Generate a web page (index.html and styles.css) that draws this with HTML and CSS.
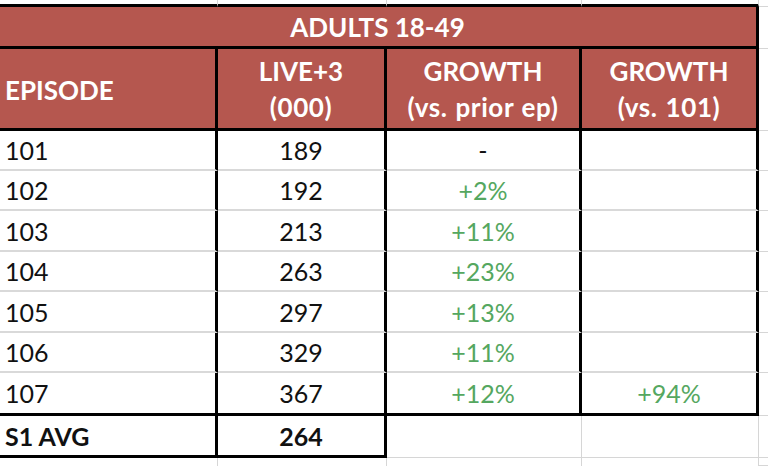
FILE: index.html
```html
<!DOCTYPE html>
<html lang="en">
<head>
<meta charset="utf-8">
<title>Adults 18-49</title>
<link rel="stylesheet" href="styles.css">
</head>
<body>
<div class="sheet" role="table">
  <div class="cell strip-top"></div>
  <div class="cell strip-top"></div>
  <div class="cell strip-top"></div>
  <div class="cell strip-top"></div>
  <div class="cell edge"></div>

  <div class="cell title">ADULTS 18-49</div>
  <div class="cell edge"></div>

  <div class="cell th th-left">EPISODE</div>
  <div class="cell th th-two"><span>LIVE+3</span><span class="sub">(000)</span></div>
  <div class="cell th th-two"><span>GROWTH</span><span class="sub">(vs. prior ep)</span></div>
  <div class="cell th th-two"><span>GROWTH</span><span class="sub">(vs. 101)</span></div>
  <div class="cell edge"></div>

  <div class="cell td ep">101</div><div class="cell td num">189</div><div class="cell td num">-</div><div class="cell td"></div><div class="cell edge"></div>
  <div class="cell td ep">102</div><div class="cell td num">192</div><div class="cell td num up">+2%</div><div class="cell td"></div><div class="cell edge"></div>
  <div class="cell td ep">103</div><div class="cell td num">213</div><div class="cell td num up">+11%</div><div class="cell td"></div><div class="cell edge"></div>
  <div class="cell td ep">104</div><div class="cell td num">263</div><div class="cell td num up">+23%</div><div class="cell td"></div><div class="cell edge"></div>
  <div class="cell td ep">105</div><div class="cell td num">297</div><div class="cell td num up">+13%</div><div class="cell td"></div><div class="cell edge"></div>
  <div class="cell td ep">106</div><div class="cell td num">329</div><div class="cell td num up">+11%</div><div class="cell td"></div><div class="cell edge"></div>
  <div class="cell td ep last">107</div><div class="cell td num last">367</div><div class="cell td num up last">+12%</div><div class="cell td num up last">+94%</div><div class="cell edge"></div>

  <div class="cell td ep total">S1 AVG</div>
  <div class="cell td num total">264</div>
  <div class="cell blank"></div>
  <div class="cell blank"></div>
  <div class="cell edge"></div>

  <div class="cell strip-bottom"></div>
  <div class="cell strip-bottom"></div>
  <div class="cell strip-bottom"></div>
  <div class="cell strip-bottom"></div>
  <div class="cell edge"></div>
</div>
</body>
</html>
```

FILE: styles.css
```css
html, body {
  margin: 0;
  padding: 0;
  background: #ffffff;
  overflow: hidden;
}

.sheet {
  display: grid;
  grid-template-columns: 218px 169px 195px 177px 1fr;
  grid-template-rows: 7px 42px 82px 40px 40px 41px 40px 41px 40px 43px 42px 1fr;
  width: 768px;
  height: 466px;
  font-family: "Lato", "Open Sans", sans-serif;
  font-size: 25px;
  color: #111111;
}

.cell {
  box-sizing: border-box;
  display: flex;
  align-items: center;
  min-width: 0;
  overflow: hidden;
  white-space: nowrap;
}

.strip-top {
  border-right: 1px solid #d6d6d6;
  border-bottom: 3px solid #000000;
}

.strip-bottom {
  border-right: 1px solid #d6d6d6;
}

.edge {
  border-bottom: 1px solid #d6d6d6;
}

.title {
  grid-column: 1 / 5;
  justify-content: center;
  background: #b5574f;
  color: #ffffff;
  font-weight: 700;
  font-size: 26px;
  border-right: 3px solid #000000;
  border-bottom: 3px solid #000000;
  padding-right: 1px;
}

.th {
  background: #b5574f;
  color: #ffffff;
  font-weight: 700;
  font-size: 26px;
  border-right: 3px solid #000000;
  border-bottom: 3px solid #000000;
}

.th-left {
  padding: 2px 0 0 5px;
}

.th-two {
  flex-direction: column;
  justify-content: center;
  align-items: center;
  line-height: 36px;
  padding-top: 1px;
}

.sub {
  letter-spacing: 0.6px;
  word-spacing: 1px;
}

.td {
  border-right: 3px solid #000000;
  border-bottom: 2px solid #d9d9d9;
  line-height: 30px;
}

.ep {
  padding-left: 5px;
}

.num {
  justify-content: center;
}

.up {
  color: #55a760;
}

.last {
  border-bottom: 3px solid #000000;
}

.total {
  font-weight: 700;
  border-bottom: 3px solid #000000;
}

.blank {
  border-right: 1px solid #d6d6d6;
  border-bottom: 1px solid #d6d6d6;
}
```
